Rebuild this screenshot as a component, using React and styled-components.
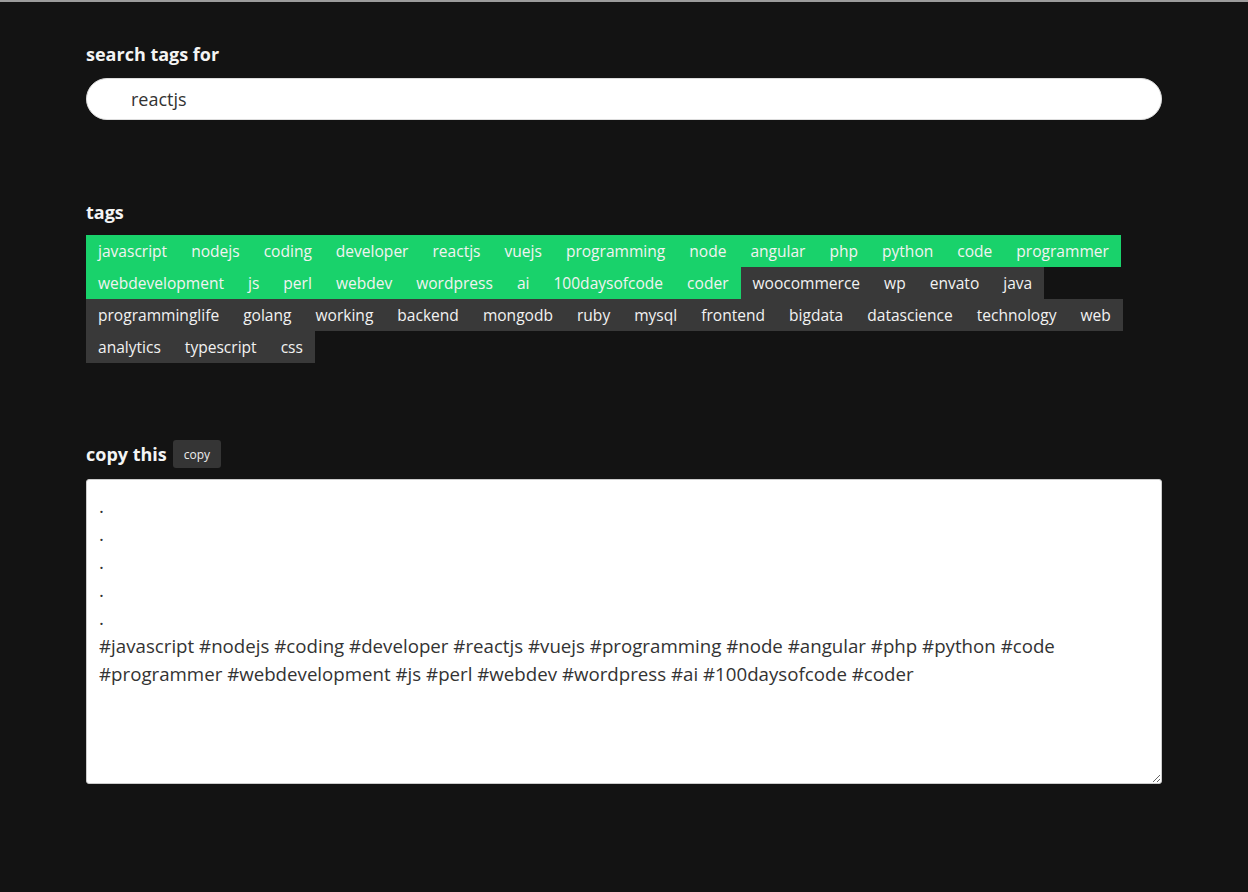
import React, { useState } from 'react';
import styled, { createGlobalStyle } from 'styled-components';

const GlobalStyle = createGlobalStyle`
  html, body {
    margin: 0;
    padding: 0;
    background: #131313;
  }
  body {
    font-family: 'Open Sans', 'Noto Sans', sans-serif;
    border-top: 2px solid #9c9c9c;
    min-height: 890px;
  }
`;

const Page = styled.main`
  width: 1076px;
  margin: 0 auto;
  padding-top: 39px;
`;

const Section = styled.section`
  margin-bottom: ${props => props.spacing || 0}px;
`;

const Heading = styled.h2`
  display: flex;
  align-items: center;
  gap: 6px;
  margin: 0 0 ${props => props.gap || 12}px 0;
  font-size: 18px;
  font-weight: 700;
  line-height: 26px;
  color: #f4f4f4;
`;

const SearchInput = styled.input`
  display: block;
  box-sizing: border-box;
  width: 100%;
  height: 42px;
  padding: 0 44px;
  border: 1px solid #ddd;
  border-radius: 21px;
  background: #fff;
  color: #333;
  font-family: inherit;
  font-size: 18px;
  outline: none;
`;

const TagList = styled.div`
  display: flex;
  flex-wrap: wrap;
`;

const Tag = styled.span`
  display: block;
  height: 32px;
  padding: 0 12px;
  line-height: 32px;
  font-size: 15.55px;
  color: #f2f2f2;
  background: ${props => (props.active ? '#19d26b' : '#393939')};
`;

const CopyButton = styled.button`
  height: 28px;
  padding: 0 11px;
  border: none;
  border-radius: 3px;
  background: #353535;
  color: #eee;
  font-family: inherit;
  font-size: 12px;
  font-weight: 400;
  cursor: pointer;
`;

const Output = styled.textarea`
  display: block;
  box-sizing: border-box;
  width: 100%;
  height: 305px;
  padding: 12px 12px;
  border: 1px solid #ccc;
  border-radius: 3px;
  background: #fff;
  color: #333;
  font-family: inherit;
  font-size: 18.7px;
  line-height: 28px;
  outline: none;
`;

const tags = [
  ['javascript', 1], ['nodejs', 1], ['coding', 1], ['developer', 1], ['reactjs', 1],
  ['vuejs', 1], ['programming', 1], ['node', 1], ['angular', 1], ['php', 1],
  ['python', 1], ['code', 1], ['programmer', 1], ['webdevelopment', 1], ['js', 1],
  ['perl', 1], ['webdev', 1], ['wordpress', 1], ['ai', 1], ['100daysofcode', 1],
  ['coder', 1], ['woocommerce', 0], ['wp', 0], ['envato', 0], ['java', 0],
  ['programminglife', 0], ['golang', 0], ['working', 0], ['backend', 0], ['mongodb', 0],
  ['ruby', 0], ['mysql', 0], ['frontend', 0], ['bigdata', 0], ['datascience', 0],
  ['technology', 0], ['web', 0], ['analytics', 0], ['typescript', 0], ['css', 0],
];

export default function App() {
  const [query, setQuery] = useState('reactjs');
  const picked = tags.filter(([, on]) => on).map(([name]) => '#' + name).join(' ');
  const text = '.\n.\n.\n.\n.\n' + picked;

  return (
    <>
      <GlobalStyle />
      <Page>
        <Section spacing={79}>
          <Heading gap={11}>search tags for</Heading>
          <SearchInput value={query} onChange={e => setQuery(e.target.value)} />
        </Section>
        <Section spacing={77}>
          <Heading gap={10}>tags</Heading>
          <TagList>
            {tags.map(([name, on]) => (
              <Tag key={name} active={on}>{name}</Tag>
            ))}
          </TagList>
        </Section>
        <Section>
          <Heading gap={11}>
            copy this
            <CopyButton>copy</CopyButton>
          </Heading>
          <Output value={text} readOnly />
        </Section>
      </Page>
    </>
  );
}
